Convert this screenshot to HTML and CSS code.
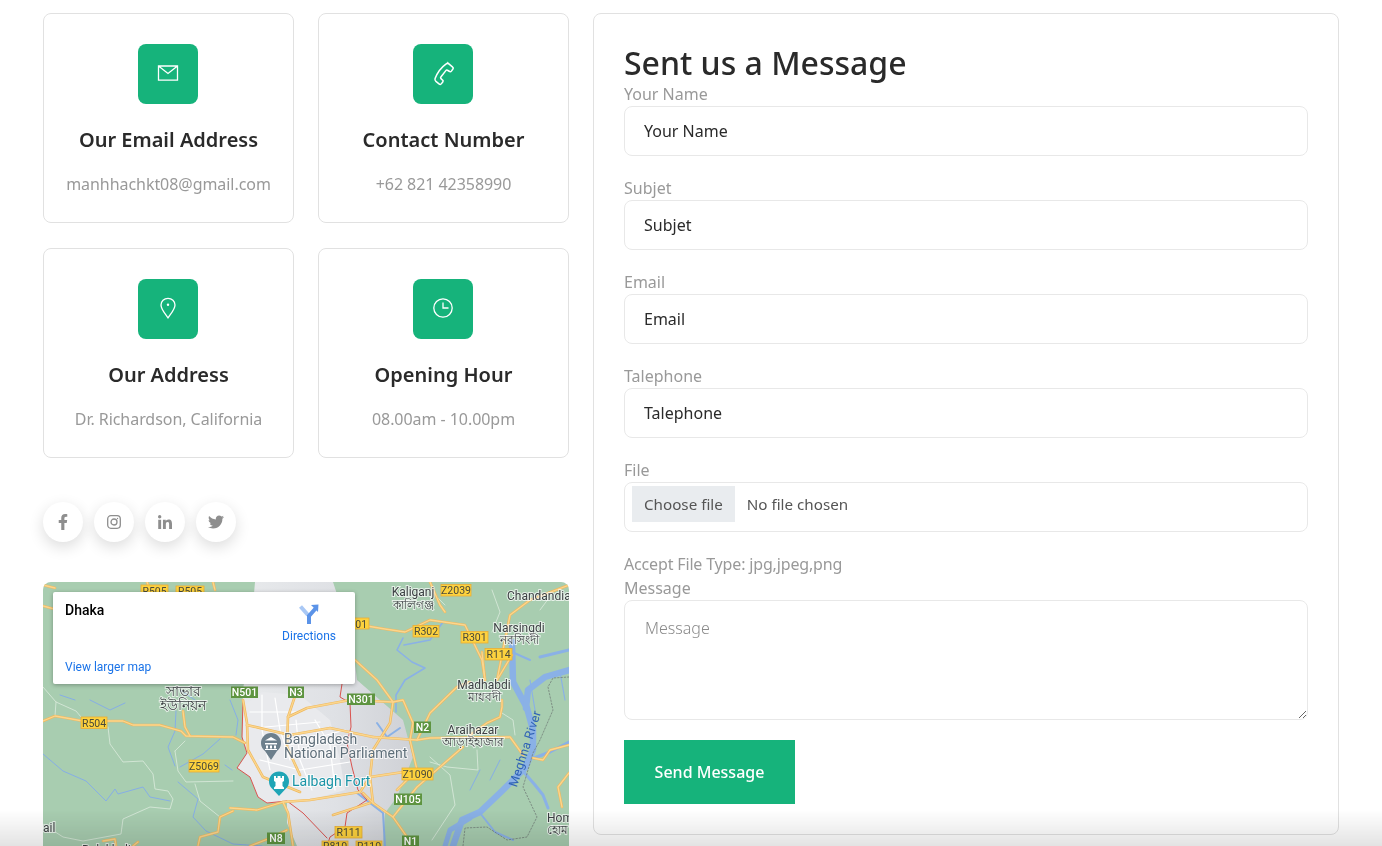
FILE: index.html
```html
<!DOCTYPE html>
<html lang="en">
<head>
  <meta charset="UTF-8" />
  <meta name="viewport" content="width=device-width, initial-scale=1" />
  <title>Contact</title>
  <link rel="stylesheet" href="styles.css">
</head>
<body>
  <div class="contact-wrap">
    <div class="col-left">
      <div class="info-grid">
        <div class="info-card">
          <div class="info-icon">
            <svg width="22" height="22" viewBox="0 0 22 22"><path d="M1.500 4h19v14.200h-19zM1.500 4l9.500 7.500L20.500 4"/></svg>
          </div>
          <h4>Our Email Address</h4>
          <p>manhhachkt08@gmail.com</p>
        </div>
        <div class="info-card">
          <div class="info-icon">
            <svg width="26" height="26" viewBox="0 0 22 22"><path d="M15.200 2.600l4 3.400c.5.4.6 1.100.2 1.600l-1.300 1.800c-.4.5-1 .6-1.500.3l-1.800-1c-.5-.3-1-.2-1.400.3l-4.200 5.400c-.4.5-.3 1 .1 1.400l1.400 1.300c.5.4.5 1 .1 1.500l-1.300 1.600c-.4.5-1.100.6-1.600.2l-2.900-2.300c-.8-.6-1-1.600-.7-2.500 1.900-4.900 5.200-9.400 9.400-12.400.5-.4 1.100-.4 1.500-.2z"/></svg>
          </div>
          <h4>Contact Number</h4>
          <p>+62 821 42358990</p>
        </div>
        <div class="info-card">
          <div class="info-icon">
            <svg width="22" height="22" viewBox="0 0 22 22"><path d="M11 20.800C7.800 16.200 4 12.300 4 8 4 4.200 7.100 1.300 11 1.300S18 4.200 18 8c0 4.300-3.800 8.200-7 12.800z"/><circle class="icon-dot" cx="11" cy="7.700" r="1.200"/></svg>
          </div>
          <h4>Our Address</h4>
          <p>Dr. Richardson, California</p>
        </div>
        <div class="info-card">
          <div class="info-icon">
            <svg width="22" height="22" viewBox="0 0 22 22"><circle cx="11" cy="11" r="9.200"/><path d="M11 5.500V11h5.500"/></svg>
          </div>
          <h4>Opening Hour</h4>
          <p>08.00am - 10.00pm</p>
        </div>
      </div>

      <div class="social-row">
        <a class="social-btn" href="#"><svg width="16" height="16" viewBox="0 0 320 512"><path d="M279.14 288l14.22-92.66h-88.91v-60.13c0-25.35 12.42-50.06 52.24-50.06h40.42V6.26S260.43 0 225.36 0c-73.22 0-121.08 44.38-121.08 124.72v70.62H22.89V288h81.39v224h100.17V288z"/></svg></a>
        <a class="social-btn" href="#"><svg class="insta" width="14" height="14" viewBox="0 0 14 14"><rect x=".7" y=".7" width="12.600" height="12.600" rx="3.200"/><circle cx="7" cy="7" r="3"/><circle class="insta-dot" cx="10.500" cy="3.500" r=".7"/></svg></a>
        <a class="social-btn" href="#"><svg width="14" height="14" viewBox="0 0 448 448"><path d="M100.28 448H7.4V148.9h92.88zM53.79 108.1C24.09 108.1 0 83.5 0 53.8a53.79 53.79 0 0 1 107.58 0c0 29.7-24.1 54.3-53.79 54.3zM447.9 448h-92.68V302.4c0-34.7-.7-79.2-48.29-79.2-48.29 0-55.69 37.7-55.69 76.7V448h-92.78V148.9h89.08v40.8h1.3c12.4-23.5 42.69-48.3 87.88-48.3 94 0 111.28 61.9 111.28 142.3V448z"/></svg></a>
        <a class="social-btn" href="#"><svg width="16" height="16" viewBox="0 0 512 512"><path d="M459.37 151.716c.325 4.548.325 9.097.325 13.645 0 138.72-105.583 298.558-298.558 298.558-59.452 0-114.68-17.219-161.137-47.106 8.447.974 16.568 1.299 25.34 1.299 49.055 0 94.213-16.568 130.274-44.832-46.132-.975-84.792-31.188-98.112-72.772 6.498.974 12.995 1.624 19.818 1.624 9.421 0 18.843-1.3 27.614-3.573-48.081-9.747-84.143-51.98-84.143-102.985v-1.299c13.969 7.797 30.214 12.67 47.431 13.319-28.264-18.843-46.781-51.005-46.781-87.391 0-19.492 5.197-37.36 14.294-52.954 51.655 63.675 129.3 105.258 216.365 109.807-1.624-7.797-2.599-15.918-2.599-24.04 0-57.828 46.782-104.934 104.934-104.934 30.213 0 57.502 12.67 76.67 33.137 23.715-4.548 46.456-13.32 66.599-25.34-7.798 24.366-24.366 44.833-46.132 57.827 21.117-2.273 41.584-8.122 60.426-16.243-14.292 20.791-32.161 39.308-52.628 54.253z"/></svg></a>
      </div>

      <div class="map-box">
        <!-- viewBox uses page coordinates, easier to read off the screenshot -->
        <svg class="map-svg" width="526" height="264" viewBox="43 582 526 264">
          <defs>
            <linearGradient id="cityFill" x1="0" y1="0" x2="1" y2="0">
              <stop offset="0" stop-color="#e8eaec"/>
              <stop offset=".55" stop-color="#dfe1e5"/>
              <stop offset="1" stop-color="#cfd1d6"/>
            </linearGradient>
            <g id="roads">
              <path d="M43 721 55 716 83 721 123 721 133 725 160 725 181 731 186 736 233 737 245 743"/>
              <path d="M183 711 185 727 190 736"/>
              <path d="M233 811 220 817 218 832 200 837 198 846"/>
              <path d="M103 841 115 839 116 846M133 846 138 842"/>
              <path d="M43 606 58 610M43 585 55 588"/>
              <path d="M147 582 150 590M213 582 215 590"/>
              <path d="M288 717 307 708 350 700 393 702 403 700 413 723 410 740 417 770 397 790"/>
              <path d="M355 660 377 680 393 702 390 723 373 750 370 777 373 803"/>
              <path d="M373 737 417 740 430 738 510 737 523 755"/>
              <path d="M297 690 288 717 287 747 300 775"/>
              <path d="M243 700 247 723 248 750 263 777 300 792"/>
              <path d="M230 808 257 810 283 802 310 800 360 792 370 777 417 770"/>
              <path d="M283 802 288 813 293 846"/>
              <path d="M363 793 373 803 393 817 407 837 410 846"/>
              <path d="M333 815 370 803M393 817 417 787 463 747"/>
              <path d="M250 846 273 837 287 830"/>
              <path d="M247 725 290 735 330 728 373 737"/>
              <path d="M417 740 430 713 457 687 470 682"/>
              <path d="M355 624 385 629 405 632 430 620 465 625 482 660 485 680"/>
              <path d="M482 652 485 680M512 655 497 680 510 615 530 600 569 585"/>
              <path d="M502 700 502 707 500 717 487 723 470 735"/>
              <path d="M533 758 543 760 550 750 569 745M569 773 558 787 562 807"/>
              <path d="M430 582 440 605 445 612"/>
            </g>
          </defs>

          <rect x="43" y="582" width="526" height="264" fill="#a8cdb0"/>
          <path class="m-city" d="M255 582H333L352 640 357 680 403 720 413 757 397 797 385 813 383 846H297L287 823 287 802 267 803 258 797 250 777 237 768 247 753 242 737 243 690 250 640z"/>
          <path class="m-urban" d="M245 705 262 692 300 695 330 720 340 760 345 790 310 800 287 801 267 803 258 797 250 777 240 768 247 753 243 737z"/>

          <g class="m-river">
            <path d="M512 642 513 682 527 708 533 730 533 750 525 768 503 790 480 812 462 820 453 846" stroke-width="6.500"/>
            <path d="M569 670 545 677 528 690 526 708" stroke-width="6.500"/>
            <path d="M540 657 569 650" stroke-width="3"/>
            <path d="M512 652 530 660" stroke-width="2"/>
            <path d="M534 758 550 752 569 742" stroke-width="3"/>
            <path d="M522 770 535 785 543 795 548 808" stroke-width="3"/>
            <path d="M480 813 495 832 513 840" stroke-width="2"/>
            <path d="M470 818 450 830 445 846" stroke-width="5"/>
            <path d="M560 672 565 700M530 680 535 710" stroke-width="1.200"/>
            <path d="M357 793 383 813 385 846" stroke-width="2"/>
            <path d="M377 723 387 737 400 728" stroke-width="2"/>
            <path d="M403 638 397 650 412 662 425 668 405 680 396 695 396 712" stroke-width="1.600"/>
            <path d="M443 622 430 640 404 645" stroke-width="1.600"/>
          </g>
          <g class="m-stream">
            <path d="M43 754 63 771 86 781 106 801 115 789 118 794 143 787 150 797 170 801"/>
            <path d="M178 782 198 799 193 817 206 831 233 844 262 846"/>
            <path d="M176 711 175 731 168 747 175 766"/>
            <path d="M180 767 203 754 220 739"/>
            <path d="M90 700 110 710 125 703M180 690 195 700M60 695 75 700"/>
            <path d="M225 765 232 770M230 700 238 720 236 735"/>
            <path d="M470 790 480 770M490 780 500 760"/>
          </g>
          <g class="m-minor">
            <path d="M108 727 110 744 123 762 143 761 153 774 155 789 168 791 173 799 170 809 150 807 123 819 121 834 83 841 63 837 43 824"/>
            <path d="M175 751 178 771 186 782 233 781M175 751 185 741"/>
            <path d="M195 784 200 801 220 817"/>
            <path d="M43 687 56 702 76 711 81 717M56 702 55 716"/>
            <path d="M502 713 513 720 515 735"/>
            <path d="M477 750 478 770 447 767 430 762"/>
            <path d="M430 757 450 775 455 805 432 840"/>
            <path d="M492 590 500 612 492 632M555 590 540 610"/>
            <path d="M430 590 445 605"/>
          </g>
          <g class="m-grid">
            <path d="M262 695 262 730 270 770M275 698 280 730 290 760M296 720 300 760 312 790M315 720 330 745 335 790"/>
            <path d="M250 712 300 712M255 728 320 722M260 760 300 770M300 770 350 762M290 745 345 730"/>
          </g>
          <path class="m-dash" d="M569 677 553 678 548 687 553 710 540 740 533 753 523 787 537 817 527 837 507 840 487 827 465 828 463 846"/>
          <path class="m-border" d="M342 684 340 697 350 703 351 727 347 743 352 767 358 790 367 800 347 813 345 827 330 837 327 846M243 700 242 737 247 753 237 768 250 777 258 797 267 803 287 801 303 813 327 838"/>

          <use href="#roads" class="road-out"/>
          <use href="#roads" class="road-in"/>

          <!-- road shields -->
          <g class="sh-y">
            <rect x="141" y="585" width="27" height="12"/><text x="154.500" y="594.500">R505</text>
            <rect x="176" y="586" width="28" height="11"/><text x="190" y="595">R505</text>
            <rect x="341" y="618" width="28" height="11"/><text x="355" y="627.500">R301</text>
            <rect x="441" y="584.500" width="30" height="11.500"/><text x="456" y="594">Z2039</text>
            <rect x="413" y="625.500" width="26" height="11.500"/><text x="426" y="635">R302</text>
            <rect x="461" y="631.500" width="27" height="11.500"/><text x="474.500" y="641">R301</text>
            <rect x="485" y="648.500" width="27" height="11.500"/><text x="498.500" y="658">R114</text>
            <rect x="81" y="717" width="26" height="11.500"/><text x="94" y="726.500">R504</text>
            <rect x="189" y="760" width="30" height="12"/><text x="204" y="770">Z5069</text>
            <rect x="402" y="768" width="31" height="12"/><text x="417.500" y="778">Z1090</text>
            <rect x="335" y="826.500" width="27" height="11.500"/><text x="348.500" y="836">R111</text>
            <rect x="322" y="841" width="26" height="11"/><text x="335" y="850">R810</text>
            <rect x="356" y="841" width="26" height="11"/><text x="369" y="850">R110</text>
          </g>
          <g class="sh-g">
            <rect x="231" y="686.500" width="27" height="11.500"/><text x="244.500" y="696">N501</text>
            <rect x="288" y="686.500" width="16" height="11.500"/><text x="296" y="696">N3</text>
            <rect x="347" y="693.500" width="28" height="11.500"/><text x="361" y="703">N301</text>
            <rect x="414" y="721.500" width="17" height="11.500"/><text x="422.500" y="731">N2</text>
            <rect x="394" y="793.500" width="28" height="11.500"/><text x="408" y="803">N105</text>
            <rect x="402" y="835.500" width="17" height="10.500"/><text x="410.500" y="845">N1</text>
            <rect x="267" y="832.500" width="18" height="11.500"/><text x="276" y="842">N8</text>
          </g>

          <!-- place names -->
          <g class="m-label">
            <text x="413" y="596" text-anchor="middle">Kaliganj</text>
            <text x="413" y="609" text-anchor="middle" class="bn">কালিগঞ্জ</text>
            <text x="507" y="600">Chandandia</text>
            <text x="519" y="632" text-anchor="middle">Narsingdi</text>
            <text x="519" y="644" text-anchor="middle" class="bn">নরসিংদী</text>
            <text x="484" y="689" text-anchor="middle">Madhabdi</text>
            <text x="484" y="701" text-anchor="middle" class="bn">মাধবদী</text>
            <text x="473" y="734" text-anchor="middle">Araihazar</text>
            <text x="473" y="746" text-anchor="middle" class="bn">আড়াইহাজার</text>
            <text x="183" y="696" text-anchor="middle" class="bn-big">সাভার</text>
            <text x="183" y="710" text-anchor="middle" class="bn-big">ইউনিয়ন</text>
            <text x="547" y="822">Hom</text>
            <text x="547" y="834" class="bn">হোম</text>
            <text x="43" y="832">ail</text>
            <text x="82" y="854">Bolakhali</text>
          </g>
          <g class="m-poi">
            <text x="284" y="744">Bangladesh</text>
            <text x="284" y="758">National Parliament</text>
          </g>
          <text class="m-poi-teal" x="292" y="786">Lalbagh Fort</text>
          <text class="m-water" transform="translate(529 750) rotate(-72)" text-anchor="middle">Meghna River</text>

          <!-- pins -->
          <path fill="#6d7f8c" d="M271 760 265 751A10 10 0 1 1 277 751z"/>
          <path fill="#fff" d="M265 743h12v1.500h-12zM266 745.500h2v3h-2zM270 745.500h2v3h-2zM274 745.500h2v3h-2zM265 749h12v1h-12zM271 737l6 3.500h-12z"/>
          <path fill="#1fa5b6" d="M279 796 272.500 789A10 10 0 1 1 285.500 789z"/>
          <path fill="#fff" d="M274 776h2v2h1.500v-2h3v2h1.500v-2h2v5l-1.500 1v4l1.500 1.500v1.500h-10v-1.500l1.500-1.500v-4l-1.500-1z"/>
        </svg>

        <div class="map-card">
          <div class="map-card-top">
            <span class="map-place">Dhaka</span>
            <a class="map-dir" href="#">
              <svg width="24" height="24" viewBox="0 0 24 24"><path class="dir-light" d="M3.500 4.500 11 13"/><path class="dir-dark" d="M12 22V14L19 6"/><path fill="#5b93e8" d="M21.500 2.500 14 3 21 10z"/></svg>
              <span>Directions</span>
            </a>
          </div>
          <a class="map-larger" href="#">View larger map</a>
        </div>
      </div>
    </div>

    <div class="col-right">
      <h2>Sent us a Message</h2>
      <form>
        <div class="form-row">
          <label class="form-label">Your Name</label>
          <input class="field" type="text" placeholder="Your Name">
        </div>
        <div class="form-row">
          <label class="form-label">Subjet</label>
          <input class="field" type="text" placeholder="Subjet">
        </div>
        <div class="form-row">
          <label class="form-label">Email</label>
          <input class="field" type="text" placeholder="Email">
        </div>
        <div class="form-row">
          <label class="form-label">Talephone</label>
          <input class="field" type="text" placeholder="Talephone">
        </div>
        <div class="form-row">
          <span class="form-label">File</span>
          <label class="field file-field">
            <input type="file" hidden>
            <span class="file-btn">Choose file</span>
            <span class="file-name">No file chosen</span>
          </label>
        </div>
        <div class="file-note">Accept File Type: jpg,jpeg,png</div>
        <div class="form-row">
          <label class="form-label">Message</label>
          <textarea class="field msg-field" placeholder="Message"></textarea>
        </div>
        <button class="send-btn" type="button">Send Message</button>
      </form>
    </div>
  </div>
  <div class="bottom-fade"></div>
</body>
</html>
```

FILE: styles.css
```css
* {
  box-sizing: border-box;
}

html,
body {
  height: 100%;
}

body {
  margin: 0;
  overflow: hidden;
  background: #fff;
  font-family: 'Noto Sans', 'Open Sans', sans-serif;
  font-size: 16px;
  line-height: 24px;
  color: #999;
}

.contact-wrap {
  display: flex;
  align-items: flex-start;
  gap: 24px;
  padding: 13px 43px 0;
  will-change: transform;
}

.col-left {
  width: 526px;
  flex: none;
}

.col-right {
  width: 746px;
  flex: none;
  padding: 30px;
  border: 1px solid #e1e1e1;
  border-radius: 8px;
}

/* info cards */
.info-grid {
  display: grid;
  grid-template-columns: 251px 251px;
  column-gap: 24px;
  row-gap: 25px;
}

.info-card {
  height: 210px;
  padding-top: 30px;
  border: 1px solid #e1e1e1;
  border-radius: 8px;
  text-align: center;
}

.info-icon {
  width: 60px;
  height: 60px;
  margin-left: 94px;
  padding-bottom: 2px;
  display: flex;
  align-items: center;
  justify-content: center;
  background: #16b37b;
  border-radius: 8px;
}

.info-icon svg {
  fill: none;
  stroke: #fff;
  stroke-width: 1.3;
}

.info-icon .icon-dot {
  fill: #fff;
  stroke: none;
}

.info-card h4 {
  margin: 24px 0 20px;
  font-size: 20px;
  line-height: 24px;
  font-weight: 600;
  color: #2a2a2a;
}

.info-card p {
  margin: 0;
  color: #999;
  letter-spacing: -0.05px;
}

/* social */
.social-row {
  display: flex;
  gap: 11px;
  margin-top: 44px;
}

.social-btn {
  width: 40px;
  height: 40px;
  display: flex;
  align-items: center;
  justify-content: center;
  background: #fff;
  border-radius: 50%;
  box-shadow: 0 5px 15px rgba(0, 0, 0, 0.14);
}

.social-btn svg {
  fill: #8e8e8e;
}

.social-btn .insta {
  fill: none;
  stroke: #8e8e8e;
  stroke-width: 1.3;
}

.social-btn .insta-dot {
  fill: #8e8e8e;
  stroke: none;
}

/* map */
.map-box {
  position: relative;
  height: 264px;
  margin-top: 40px;
  border-radius: 8px 8px 0 0;
  overflow: hidden;
  font-family: Roboto, 'Liberation Sans', sans-serif;
}

.map-svg {
  display: block;
  font-family: Roboto, 'Noto Sans', sans-serif;
}

.m-city {
  fill: url(#cityFill);
}

.m-urban {
  fill: #e9eaed;
}

.m-river path,
.m-stream path,
.m-minor path,
.m-grid path,
.m-dash,
.m-border,
.road-out,
.road-in {
  fill: none;
  stroke-linejoin: round;
  stroke-linecap: round;
}

.m-river path {
  stroke: #8ab1e6;
}

.m-stream path {
  stroke: #86aee6;
  stroke-width: 1;
}

.m-minor path {
  stroke: #d6e8d8;
  stroke-width: 0.9;
}

.m-grid path {
  stroke: #fff;
  stroke-width: 1.2;
}

.m-dash {
  stroke: #74807a;
  stroke-width: 0.8;
  stroke-dasharray: 1.5 1.8;
}

.road-out {
  stroke: #efb95f;
  stroke-width: 2.6;
}

.road-in {
  stroke: #fbd68e;
  stroke-width: 1.3;
}

.m-border {
  stroke: #d9534f;
  stroke-width: 1;
}

.sh-y rect {
  fill: #fdd23e;
  stroke: #e9ad36;
  stroke-width: 0.8;
}

.sh-y text {
  fill: #4a4a3a;
  font-size: 10.5px;
  text-anchor: middle;
}

.sh-g rect {
  fill: #5e9440;
}

.sh-g text {
  fill: #fff;
  font-size: 10.5px;
  font-weight: 500;
  text-anchor: middle;
}

.m-label text {
  fill: #3c4043;
  font-size: 12px;
  paint-order: stroke;
  stroke: rgba(255, 255, 255, 0.7);
  stroke-width: 2px;
}

.m-label .bn {
  font-size: 11.5px;
}

.m-label .bn-big {
  font-size: 14px;
}

.m-poi text {
  fill: #5f6f7a;
  font-size: 14px;
  paint-order: stroke;
  stroke: rgba(255, 255, 255, 0.75);
  stroke-width: 2px;
}

.m-poi-teal {
  fill: #1a94a6;
  font-size: 14px;
  paint-order: stroke;
  stroke: rgba(255, 255, 255, 0.75);
  stroke-width: 2px;
}

.m-water {
  fill: #2f62b5;
  font-size: 12.5px;
  letter-spacing: 0.3px;
}

.map-card {
  position: absolute;
  left: 10px;
  top: 10px;
  width: 302px;
  height: 92px;
  padding: 9px 12px;
  background: #fff;
  box-shadow: 0 1px 4px rgba(0, 0, 0, 0.3);
  border-radius: 2px;
}

.map-card-top {
  display: flex;
  justify-content: space-between;
}

.map-place {
  font-size: 14px;
  line-height: 18px;
  font-weight: 500;
  color: #000;
}

.map-dir {
  display: flex;
  flex-direction: column;
  align-items: center;
  margin: 1px 7px 0 0;
  font-size: 12px;
  line-height: 14px;
  color: #1a73e8;
  text-decoration: none;
}

.map-dir svg {
  margin-bottom: 3px;
  fill: none;
}

.dir-light {
  stroke: #a9c8f5;
  stroke-width: 4;
}

.dir-dark {
  stroke: #5b93e8;
  stroke-width: 4;
}

.map-larger {
  position: absolute;
  left: 12px;
  bottom: 10px;
  font-size: 12px;
  line-height: 14px;
  color: #1a73e8;
  text-decoration: none;
}

/* form */
.col-right h2 {
  margin: 0;
  font-size: 32px;
  line-height: 38px;
  font-weight: 500;
  color: #2a2a2a;
}

.form-row {
  margin-bottom: 20px;
}

.form-label {
  display: block;
  color: #999;
}

.field {
  display: block;
  width: 100%;
  height: 50px;
  padding: 0 19px;
  border: 1px solid #e8e8e8;
  border-radius: 8px;
  background: #fff;
  font-family: inherit;
  font-size: 16px;
  color: #2a2a2a;
  outline: none;
}

.field::placeholder {
  color: #2a2a2a;
  opacity: 1;
}

.file-field {
  display: flex;
  padding: 3px 7px;
  font-size: 15.2px;
  line-height: 36px;
  color: #555;
}

.file-btn {
  height: 36px;
  margin-right: 12px;
  padding: 0 12px;
  background: #e9ecef;
}

.file-note {
  line-height: 24px;
  letter-spacing: -0.16px;
}

.msg-field {
  height: 120px;
  padding: 15px 20px;
  line-height: 24px;
  font-weight: 300;
}

.msg-field::placeholder {
  color: #8a8a8a;
}

.send-btn {
  display: block;
  width: 171px;
  height: 64px;
  border: none;
  background: #16b37b;
  font-family: inherit;
  font-size: 16px;
  font-weight: 500;
  color: #fff;
}

.bottom-fade {
  position: fixed;
  left: 0;
  right: 0;
  bottom: 0;
  height: 36px;
  background: linear-gradient(to bottom, rgba(0, 0, 0, 0), rgba(0, 0, 0, 0.11));
  pointer-events: none;
}
```
